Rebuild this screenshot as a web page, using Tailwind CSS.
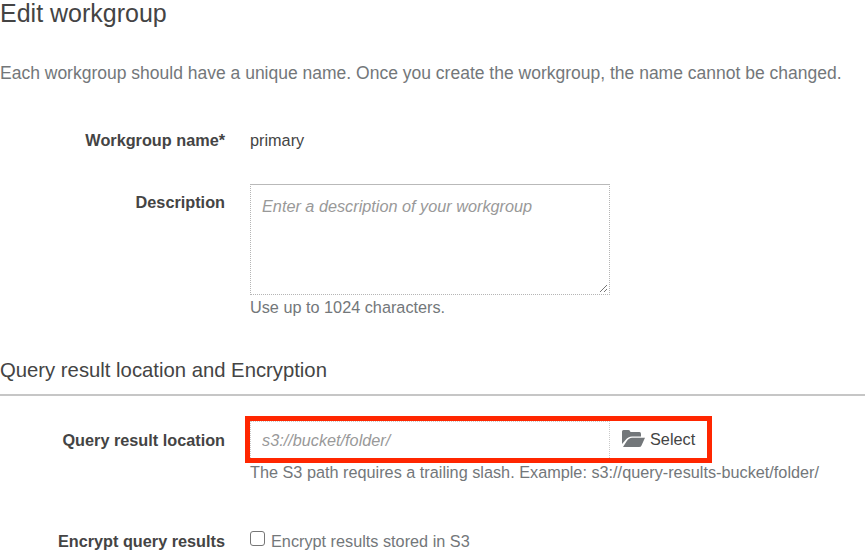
<!DOCTYPE html>
<html lang="en">
<head>
<meta charset="utf-8">
<title>Edit workgroup</title>
<script src="https://cdn.jsdelivr.net/npm/@tailwindcss/browser@4"></script>
</head>
<body class="bg-white">
<main class="flex h-[556px] w-[865px] flex-col overflow-hidden whitespace-nowrap font-['Liberation_Sans',Arial,sans-serif] text-[16.25px] leading-5 text-[#444]">
  <h1 class="h-[28px] text-[25px] leading-[26px]">Edit workgroup</h1>
  <p class="mt-[35px] h-5 text-[17.5px] text-[#73777a]">Each workgroup should have a unique name. Once you create the workgroup, the name cannot be changed.</p>

  <div class="mt-[47px] flex h-5">
    <div class="w-[225px] text-right font-bold">Workgroup name*</div>
    <div class="ml-[25px]">primary</div>
  </div>

  <div class="mt-[34px] flex h-[134px]">
    <label for="description" class="w-[225px] pt-2 text-right font-bold">Description</label>
    <div class="ml-[25px] flex flex-col">
      <div class="relative h-[111px] w-[360px]">
        <textarea id="description" class="block h-[111px] w-[360px] resize-none border border-dotted border-[#b5b5b5] border-t-[#b9b9b9] [border-top-style:solid] px-[11px] py-[11px] italic leading-5 placeholder:text-[#999]" placeholder="Enter a description of your workgroup"></textarea>
        <svg class="absolute bottom-[2px] right-[2px] h-[9px] w-[9px]" viewBox="0 0 9 9" fill="none" stroke="#666" stroke-width="0.9"><path d="M1 8 8 1M5 8 8 5"/></svg>
      </div>
      <div class="mt-[2px] text-[#73777a]">Use up to 1024 characters.</div>
    </div>
  </div>

  <h2 class="mt-[40px] h-6 text-[20.3px] leading-6">Query result location and Encryption</h2>
  <div class="mt-[12px] h-[2px] shrink-0 bg-[#c6c6c6]"></div>

  <div class="mt-[20px] flex h-[68px]">
    <label for="location" class="w-[225px] pt-[14px] text-right font-bold">Query result location</label>
    <div class="ml-[20px]">
      <div class="flex h-[47px] w-[467px] border-[5px] border-[#ff2600]">
        <input id="location" class="h-[37px] w-[360px] border-x border-t border-dotted border-[#c9c9c9] px-[11px] pt-px italic placeholder:text-[#999]" placeholder="s3://bucket/folder/">
        <button type="button" class="flex flex-1 items-start pl-[12px] pt-[8px] text-[#444]">
          <svg class="mr-[5px] mt-px h-[17px] w-[23px]" viewBox="0 0 23 17"><path fill="#73777a" d="M0 14V1.500Q0 0 1.500 0H6.500Q8 0 8.500 2H17.500Q19 2 19 4V6.500H10Q6 6.500 3.500 10ZM1 17 4.500 11.500Q7 7.800 10 7.800H23L19.500 15.500Q19 17 17 17Z"/></svg>
          Select
        </button>
      </div>
      <div class="-mt-px ml-[5px] text-[#73777a]">The S3 path requires a trailing slash. Example: s3://query-results-bucket/folder/</div>
    </div>
  </div>

  <div class="mt-[47px] flex h-5">
    <div class="w-[225px] text-right font-bold">Encrypt query results</div>
    <label class="ml-[25px] flex text-[#73777a]">
      <input type="checkbox" class="mr-[6px] h-[15px] w-[15px] appearance-none rounded-[3px] border border-[#767676] bg-white">
      <span>Encrypt results stored in S3</span>
    </label>
  </div>
</main>
</body>
</html>
